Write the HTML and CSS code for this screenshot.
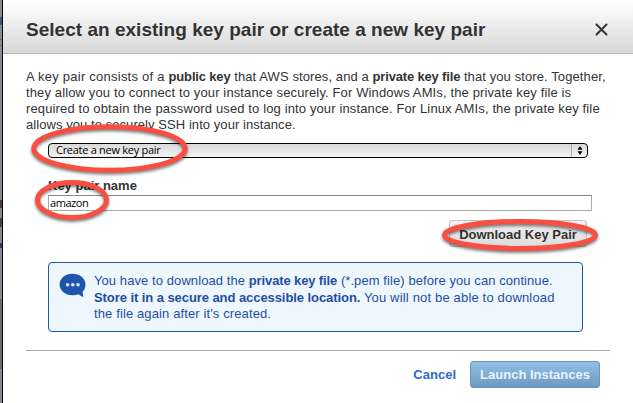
FILE: index.html
```html
<!DOCTYPE html>
<html lang="en">
<head>
<meta charset="utf-8">
<title>Select a key pair</title>
<link rel="stylesheet" href="styles.css">
</head>
<body>
<div class="backdrop"></div>
<main class="dialog">
  <header class="header">
    <h1 class="title">Select an existing key pair or create a new key pair</h1>
    <svg class="close" width="13" height="13" viewBox="0 0 13 13"><path d="M1.5 1.5 11.5 11.5M11.5 1.5 1.5 11.5"/></svg>
  </header>
  <div class="content">
    <p class="intro">
      <span class="line l1"><span class="lead">A key pair consists of a </span><b>public key</b> that AWS stores, and a <b>private key file</b> that you store. Together,</span>
      <span class="line l2">they allow you to connect to your instance securely. For Windows AMIs, the private key file is</span>
      <span class="line l2">required to obtain the password used to log into your instance. For Linux AMIs, the private key file</span>
      <span class="line l4">allows you to securely SSH into your instance.</span>
    </p>
    <div class="form">
      <div class="select"><span class="select-text">Create a new key pair</span>
        <span class="stepper"><svg width="6" height="9" viewBox="0 0 6 9"><path d="M3 0 5.5 3.800H.5zM3 9 .5 5.200h5z"/></svg></span>
      </div>
      <div class="label">Key pair name</div>
      <div class="input"><span class="input-text">amazon</span></div>
      <div class="download">Download Key Pair</div>
      <div class="info">
        <svg class="bubble" width="27" height="25" viewBox="0 0 27 25"><path d="M13.5.8C6.300.8.6 5.500.6 11.500s5.700 10.800 12.900 10.800c2.200 0 4-.3 5.700-1l5.200 2.900-.8-5.500c1.900-2 2.900-4.300 2.900-7.200C26.500 5.500 20.700.8 13.500.8z"/><circle cx="8.600" cy="11.700" r="1.800"/><circle cx="13.800" cy="11.700" r="1.800"/><circle cx="19" cy="11.700" r="1.800"/></svg>
        <p class="notice">
          <span class="line n1">You have to download the <b>private key file</b> (*.pem file) before you can continue.</span>
          <span class="line n2"><b>Store it in a secure and accessible location.</b> You will not be able to download</span>
          <span class="line n3">the file again after it's created.</span>
        </p>
      </div>
    </div>
    <footer class="footer">
      <a class="cancel">Cancel</a>
      <div class="launch">Launch Instances</div>
    </footer>
  </div>
</main>
<svg class="marks" width="633" height="403" viewBox="0 0 633 403">
  <ellipse cx="109.500" cy="148.500" rx="75.700" ry="21.800"/>
  <ellipse cx="72" cy="200" rx="34.500" ry="17.500"/>
  <ellipse cx="520" cy="235" rx="75.500" ry="13.500"/>
</svg>
</body>
</html>
```
FILE: styles.css
```css
* { box-sizing: border-box; }
body {
  margin: 0;
  width: 633px;
  height: 403px;
  display: flex;
  overflow: hidden;
  background: #fff;
  color: #333;
  font: 13px/16px "Liberation Sans", Arial, sans-serif;
}
.backdrop {
  width: 3px;
  flex: none;
  border-right: 1px solid #000;
  background: linear-gradient(#868b91 0 17px, #40577c 17px 25px, #868b91 25px 39px, #8a6546 39px 40px, #868b91 40px 45px, #8a6546 45px 46px, #858c96 46px 200px, #4d3b3d 200px 208px, #858c96 208px 218px, #4d4246 218px 227px, #858c96 227px 243px, #2f3d6c 243px 248px, #858c96 248px 299px, #686b70 299px 369px, #858c96 369px);
}
.dialog { width: 630px; }
.header {
  height: 54px;
  padding: 6px 25px 0 23px;
  display: flex;
  align-items: center;
  justify-content: space-between;
  border-bottom: 1px solid #b8b8b8;
  background: linear-gradient(#fff 0, #f9f9f9 10px, #d8d8d8 53px);
}
.title { margin: 0; font-size: 19px; line-height: 22px; letter-spacing: .02px; white-space: nowrap; }
.close { fill: none; stroke: #383838; stroke-width: 2.1; stroke-linecap: round; }
.content { padding: 15px 23px 0 23px; }
.intro, .notice { margin: 0; }
.line { display: block; width: max-content; white-space: nowrap; }
.l1 { letter-spacing: .1px; }
.l1 .lead { letter-spacing: .24px; }
.l1 b { letter-spacing: -.17px; }
.l2 { letter-spacing: .13px; }
.l4 { letter-spacing: .065px; }
.n1 { letter-spacing: .08px; }
.n1 b { letter-spacing: -.12px; }
.n2 { letter-spacing: .17px; }
.n2 b { letter-spacing: -.07px; }
.n3 { letter-spacing: .12px; }
.form { padding: 0 17px 0 22px; }
.select {
  width: 540px;
  height: 15px;
  margin-top: 10px;
  display: flex;
  justify-content: space-between;
  border: 1px solid #000;
  border-radius: 4px;
  background: linear-gradient(#d9d9d9, #f4f4f4);
  color: #000;
  font: 11px/12px "Open Sans", sans-serif;
}
.select-text { margin-left: 7px; letter-spacing: -.28px; }
.stepper { width: 16px; display: flex; align-items: center; justify-content: center; border-left: 1px solid #aaa; }
.label { margin-top: 20px; height: 17px; font-weight: bold; }
.input {
  width: 544px;
  height: 16px;
  border: 1px solid #aaa;
  border-top-color: #888;
  padding-left: 1px;
  color: #000;
  font: 11px/14px "Open Sans", sans-serif;
  letter-spacing: -.45px;
}
.download {
  width: 138px;
  height: 27px;
  margin: 9px 0 0 401px;
  border: 1px solid #c4c4c4;
  border-radius: 3px;
  background: linear-gradient(#f1f1f1, #ddd);
  text-align: center;
  font-weight: bold;
  line-height: 27px;
}
.info {
  width: 535px;
  height: 70px;
  margin-top: 15px;
  padding: 10px;
  display: flex;
  border: 1px solid #1d5a9f;
  border-radius: 4px;
  background: #eef6fe;
  color: #1f4fa3;
}
.bubble { flex: none; fill: #1f55ad; }
.bubble circle { fill: #dceaff; }
.notice { margin-left: 8px; line-height: 16.500px; }
.footer {
  margin-top: 18px;
  padding: 10px 10px 0 0;
  display: flex;
  justify-content: flex-end;
  align-items: center;
  border-top: 1px solid #aaa;
  font-weight: bold;
}
.cancel { color: #3068ce; margin-right: 14px; }
.launch {
  width: 130px;
  height: 27px;
  border: 1px solid #6795c0;
  border-radius: 3px;
  background: linear-gradient(#91bfe6, #6e99c0);
  color: #e9f3fc;
  text-align: center;
  line-height: 26px;
}
.marks { position: absolute; left: 0; top: 0; fill: none; stroke: #f84f42; stroke-width: 5; filter: drop-shadow(0 2px 1.500px rgba(0, 0, 0, .5)); }
```
